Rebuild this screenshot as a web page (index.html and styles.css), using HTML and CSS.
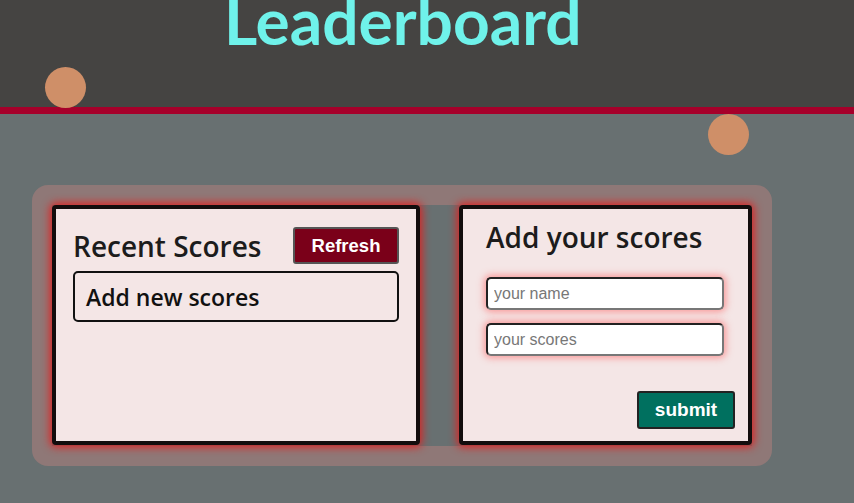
FILE: index.html
```html
<!DOCTYPE html>
<html lang="en">
<head>
<meta charset="utf-8">
<title>Leaderboard</title>
<link rel="stylesheet" href="styles.css">
</head>
<body>
<header class="top">
  <h1 class="title">Leaderboard</h1>
</header>
<span class="ball ball-a"></span>
<span class="ball ball-b"></span>
<main class="board">
  <section class="card card-scores">
    <div class="card-head">
      <h2 class="card-title">Recent Scores</h2>
      <button class="btn btn-refresh" type="button">Refresh</button>
    </div>
    <ul class="score-list">
      <li class="score-item">Add new scores</li>
    </ul>
  </section>
  <section class="card card-form">
    <h2 class="card-title">Add your scores</h2>
    <form class="score-form">
      <input class="field" type="text" placeholder="your name">
      <input class="field" type="text" placeholder="your scores">
      <div class="form-actions">
        <button class="btn btn-submit" type="button">submit</button>
      </div>
    </form>
  </section>
</main>
</body>
</html>
```
FILE: styles.css
```css
* { box-sizing: border-box; }
html, body { margin: 0; padding: 0; }
body {
  background: #687071;
  font-family: "Open Sans", "Lato", sans-serif;
  width: 854px;
  height: 503px;
  overflow: hidden;
  position: relative;
}
.top {
  display: flow-root;
  background: #454442;
  height: 114px;
  border-bottom: 7px solid #a6002a;
  padding-left: 224px;
}
.title {
  margin: 0;
  margin-top: -15px;
  font-family: "Lato", sans-serif;
  font-size: 64px;
  line-height: 72px;
  font-weight: 700;
  color: #6ff2ea;
}
.ball {
  position: absolute;
  width: 41px;
  height: 41px;
  border-radius: 50%;
  background: #cf8f68;
}
.ball-a { left: 45px; top: 67px; }
.ball-b { left: 708px; top: 114px; }

.board {
  margin: 71px 0 0 32px;
  width: 740px;
  height: 281px;
  border: 20px solid #8f7877;
  border-radius: 16px;
  display: flex;
  gap: 39px;
}
.card {
  background: #f4e6e6;
  border: 4px solid #130d0d;
  border-radius: 4px;
  box-shadow: 0 0 9px 2px #e02020;
  height: 240px;
}
.card-scores { width: 368px; padding: 18px 17px; }
.card-form { width: 293px; padding: 12px 13px 12px 23px; }
.card-head {
  display: flex;
  justify-content: space-between;
  align-items: center;
}
.card-title {
  margin: 0;
  font-size: 28px;
  font-weight: 600;
  color: #1c1c1c;
  line-height: 30px;
}
.card-form .card-title { margin-top: 1px; }
.btn {
  font-family: "Liberation Sans", Arial, sans-serif;
  font-weight: 700;
  color: #fff;
  border-radius: 3px;
  cursor: pointer;
}
.btn-refresh {
  background: #7a0019;
  border: 2px solid #555;
  width: 106px;
  height: 37px;
  font-size: 18.5px;
}
.score-list {
  list-style: none;
  margin: 7px 0 0;
  padding: 0;
}
.score-item {
  border: 2px solid #111;
  border-radius: 5px;
  height: 51px;
  padding: 0 11px;
  display: flex;
  align-items: center;
  font-size: 23px;
  font-weight: 600;
  color: #111;
}
.score-form {
  display: flex;
  flex-direction: column;
  margin-top: 25px;
}
.field {
  width: 238px;
  height: 33px;
  border: 2px solid #222;
  border-bottom-color: #777;
  border-right-color: #777;
  border-radius: 5px;
  background: #fff;
  box-shadow: 0 0 7px 2px rgba(255, 90, 90, 0.55);
  font-family: "Liberation Sans", Arial, sans-serif;
  font-size: 16px;
  padding: 0 6px;
  margin-bottom: 13px;
}
.field::placeholder { color: #777; }
.form-actions {
  display: flex;
  justify-content: flex-end;
  margin-top: 22px;
}
.btn-submit {
  background: #00705f;
  border: 2px solid #222;
  width: 98px;
  height: 38px;
  font-size: 19px;
}
```
